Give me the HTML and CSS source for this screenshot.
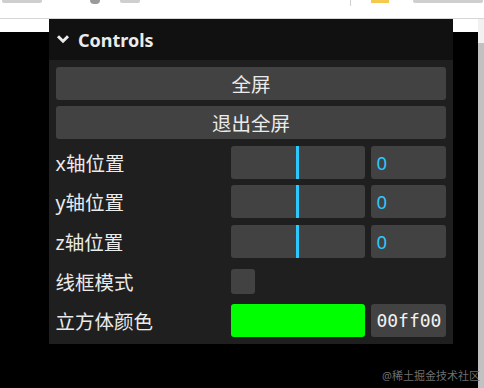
FILE: index.html
```html
<!DOCTYPE html>
<html lang="zh-CN">
<head>
  <meta charset="UTF-8">
  <title>Controls</title>
  <link rel="stylesheet" href="styles.css">
</head>
<body>
  <div class="browser-bar">
    <span class="bar-item w40"></span>
    <span class="bar-dot"></span>
    <span class="bar-item w20"></span>
    <span class="bar-sep"></span>
    <span class="bar-folder"></span>
    <span class="bar-item w70"></span>
  </div>

  <div class="viewport">
    <div class="page">
      <div class="page-top"></div>
      <div class="canvas"></div>
    </div>
    <div class="scrollbar"><div class="thumb"></div></div>

    <div class="gui">
      <div class="gui-title">
        <svg class="chevron" width="14" height="10" viewBox="0 0 14 10">
          <polyline points="2,2.2 7,7.2 12,2.2" fill="none" stroke="#ebebeb" stroke-width="3"/>
        </svg>
        <span>Controls</span>
      </div>
      <div class="gui-children">
        <button class="gui-button">全屏</button>
        <button class="gui-button">退出全屏</button>

        <div class="controller">
          <div class="name">x轴位置</div>
          <div class="widget">
            <div class="slider"><div class="fill"></div></div>
            <div class="number">0</div>
          </div>
        </div>
        <div class="controller">
          <div class="name">y轴位置</div>
          <div class="widget">
            <div class="slider"><div class="fill"></div></div>
            <div class="number">0</div>
          </div>
        </div>
        <div class="controller">
          <div class="name">z轴位置</div>
          <div class="widget">
            <div class="slider"><div class="fill"></div></div>
            <div class="number">0</div>
          </div>
        </div>
        <div class="controller">
          <div class="name">线框模式</div>
          <div class="widget">
            <div class="checkbox"></div>
          </div>
        </div>
        <div class="controller">
          <div class="name">立方体颜色</div>
          <div class="widget">
            <div class="color-display"></div>
            <div class="color-text">00ff00</div>
          </div>
        </div>
      </div>
    </div>

    <div class="watermark">@稀土掘金技术社区</div>
  </div>
</body>
</html>
```

FILE: styles.css
```css
html, body {
  height: 100%;
}
body {
  margin: 0;
  overflow: hidden;
  display: flex;
  flex-direction: column;
  font-family: "Noto Sans", "Noto Sans CJK SC", sans-serif;
  background: #fff;
}

/* browser chrome, mostly cut off */
.browser-bar {
  height: 18px;
  border-bottom: 1px solid #d6d6d6;
  background: #fff;
  display: flex;
  align-items: flex-start;
  gap: 20px;
  padding-left: 2px;
  overflow: hidden;
}
.bar-item {
  height: 3px;
  background: #cfcfcf;
  border-radius: 0 0 2px 2px;
}
.w20 { width: 20px; }
.w40 { width: 40px; }
.w70 { width: 70px; margin-left: 4px; }
.bar-dot {
  width: 10px;
  height: 4px;
  margin-left: 28px;
  background: #9a9a9a;
  border-radius: 0 0 5px 5px;
}
.bar-sep {
  width: 1px;
  height: 6px;
  margin-left: 190px;
  background: #d0d0d0;
}
.bar-folder {
  width: 18px;
  height: 3px;
  background: #f3c94f;
}

.viewport {
  flex: 1;
  display: flex;
  position: relative;
}
.page {
  flex: 1;
  display: flex;
  flex-direction: column;
}
.page-top {
  height: 13px;
  background: #fff;
}
.canvas {
  flex: 1;
  background: #000;
}
.scrollbar {
  width: 6px;
  background: #f1f1f1;
  padding-top: 24px;
}
.thumb {
  height: 100%;
  background: #c1c1c1;
}

/* controls panel */
.gui {
  position: absolute;
  left: 49px;
  top: 0;
  width: 404px;
  color: #ebebeb;
  background: #1f1f1f;
}
.gui-title {
  height: 41px;
  background: #111;
  display: flex;
  align-items: center;
  gap: 8px;
  padding-left: 7px;
  font-size: 18px;
  font-weight: bold;
}
.chevron {
  margin-top: -1px;
}
.gui-children {
  padding: 6.6px;
  display: flex;
  flex-direction: column;
  gap: 6.6px;
}
.gui-button {
  height: 33px;
  border: 0;
  border-radius: 3px;
  background: #424242;
  color: #ebebeb;
  font-family: inherit;
  font-size: 19.5px;
  padding: 0;
}
.controller {
  height: 33px;
  display: grid;
  grid-template-columns: 45% 1fr;
  align-items: center;
  font-size: 19.5px;
}
.name {
  white-space: nowrap;
}
.widget {
  height: 33px;
  display: flex;
  align-items: center;
  gap: 6.6px;
}
.slider {
  flex: 1;
  height: 33px;
  background: #424242;
  border-radius: 3px;
  overflow: hidden;
}
.fill {
  width: calc(50% - 1.7px);
  height: 100%;
  border-right: 3.3px solid #2cc9ff;
}
.number {
  width: 75px;
  height: 33px;
  box-sizing: border-box;
  padding-left: 5px;
  line-height: 33px;
  background: #424242;
  border-radius: 3px;
  color: #2cc9ff;
  font-size: 18.5px;
}
.checkbox {
  width: 24px;
  height: 25px;
  background: #424242;
  border-radius: 3px;
}
.color-display {
  flex: 1;
  height: 33px;
  background: #00ff00;
  border-radius: 3px;
}
.color-text {
  width: 75px;
  height: 33px;
  box-sizing: border-box;
  padding-left: 5px;
  line-height: 33px;
  background: #424242;
  border-radius: 3px;
  color: #f2f2f2;
  font-family: "DejaVu Sans Mono", monospace;
  font-size: 18px;
}

.watermark {
  position: absolute;
  right: 4px;
  bottom: 5px;
  font-size: 11px;
  color: #6e6e6e;
}
```
